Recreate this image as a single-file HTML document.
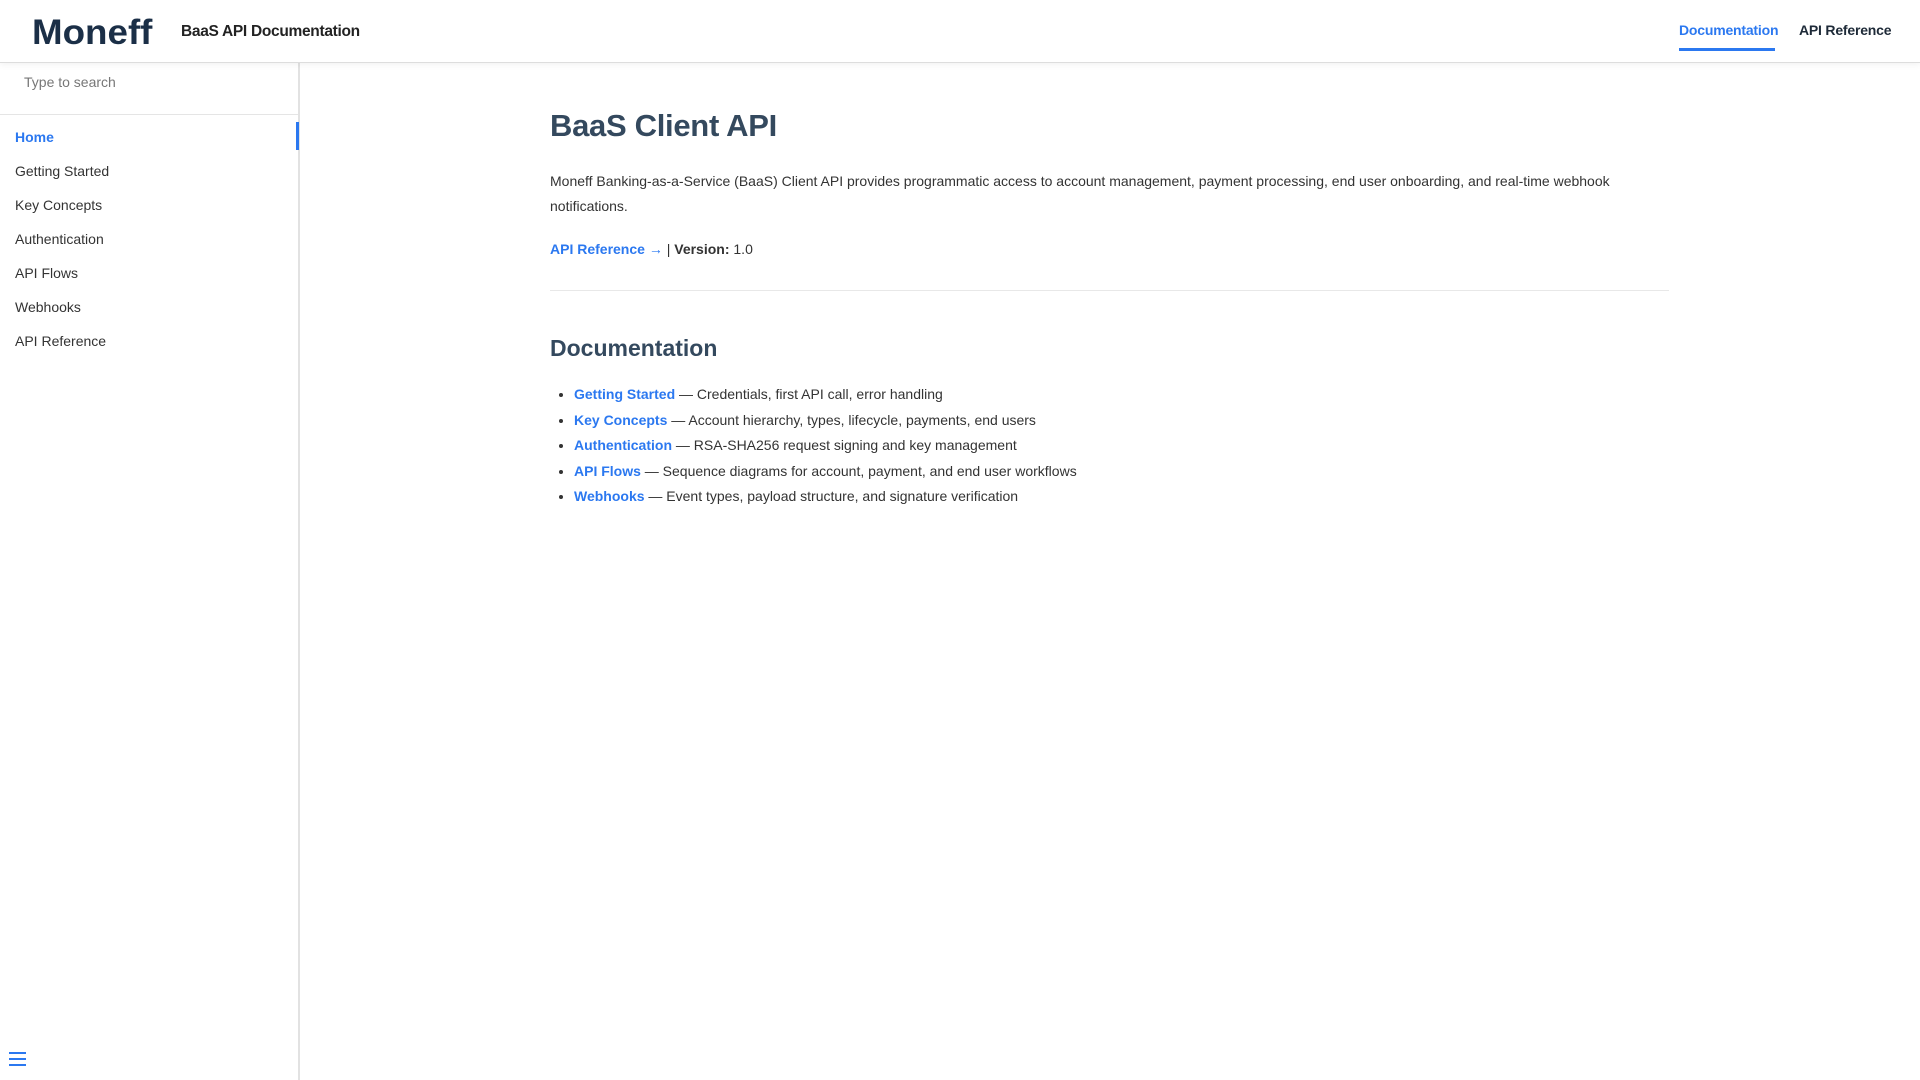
<!DOCTYPE html>
<html><head><meta charset="utf-8"><style>
*{box-sizing:border-box;margin:0;padding:0}
body{width:1920px;height:1080px;overflow:hidden;background:#fff;font-family:"Liberation Sans",sans-serif;color:#2c3e50;position:relative}
.hdr{position:absolute;left:0;top:0;width:1920px;height:63px;border-bottom:1px solid #ddd;box-shadow:0 2px 6px rgba(0,0,0,.05);background:#fff;z-index:2}
.logo{position:absolute;left:32px;top:13px;font-size:35px;font-weight:bold;color:#1b2f47;letter-spacing:0px;transform:scaleX(1.05);transform-origin:left}
.title{position:absolute;left:181px;top:23px;font-size:15.5px;color:#222;font-weight:bold;letter-spacing:-0.3px}
.nav{position:absolute;top:22px;font-size:14px;font-weight:bold;letter-spacing:-0.2px}
.nav.a{left:1679px;color:#2b78f0}
.nav.b{left:1799px;color:#1e2a38}
.ul{position:absolute;left:1679px;top:48px;width:96px;height:3px;background:#2b78f0}
.side{position:absolute;left:0;top:63px;width:300px;height:1017px;border-right:2px solid #e2e2e2}
.search{height:52px;border-bottom:1px solid #e5e5e5;padding:11px 0 0 24px;font-size:14px;color:#777}
.item{position:absolute;left:15px;font-size:14px;color:#333}
.bar{position:absolute;left:296px;top:59px;width:3px;height:28px;background:#2b78f0}
.ham{position:absolute;left:9px;top:1052px;width:17px}
.ham i{display:block;height:2px;background:#2b78f0;margin-bottom:4px}
.main{position:absolute;left:550px;top:0;width:1119px}
h1{position:absolute;top:108px;font-size:31px;font-weight:bold;color:#34495e;white-space:nowrap;letter-spacing:-0.3px}
p{position:absolute;font-size:14px;line-height:25px;color:#333;white-space:nowrap}
a{color:#2b78f0;font-weight:bold;text-decoration:none}
.hr{position:absolute;top:290px;left:0;width:1119px;height:1px;background:#e8e8e8}
h2{position:absolute;top:335px;font-size:23px;font-weight:bold;color:#34495e}
ul{position:absolute;top:382px;left:24px;font-size:14px;color:#333;white-space:nowrap}
li{height:25.5px;line-height:25.5px}
</style></head><body>
<div class="hdr">
<div class="logo">Moneff</div>
<div class="title">BaaS API Documentation</div>
<div class="nav a">Documentation</div>
<div class="nav b">API Reference</div>
<div class="ul"></div>
</div>
<div class="side">
<div class="search">Type to search</div>
<div class="bar"></div>
<div class="item" style="top:66px;color:#2b78f0;font-weight:bold">Home</div>
<div class="item" style="top:100px">Getting Started</div>
<div class="item" style="top:134px">Key Concepts</div>
<div class="item" style="top:168px">Authentication</div>
<div class="item" style="top:202px">API Flows</div>
<div class="item" style="top:236px">Webhooks</div>
<div class="item" style="top:270px">API Reference</div>
</div>
<div class="ham"><i></i><i></i><i></i></div>
<div class="main">
<h1>BaaS Client API</h1>
<p style="top:169px">Moneff Banking-as-a-Service (BaaS) Client API provides programmatic access to account management, payment processing, end user onboarding, and real-time webhook<br>notifications.</p>
<p style="top:237px"><a>API Reference →</a> | <b>Version:</b> 1.0</p>
<div class="hr"></div>
<h2>Documentation</h2>
<ul>
<li><a>Getting Started</a> — Credentials, first API call, error handling</li>
<li><a>Key Concepts</a> — Account hierarchy, types, lifecycle, payments, end users</li>
<li><a>Authentication</a> — RSA-SHA256 request signing and key management</li>
<li><a>API Flows</a> — Sequence diagrams for account, payment, and end user workflows</li>
<li><a>Webhooks</a> — Event types, payload structure, and signature verification</li>
</ul>
</div>
</body></html>
